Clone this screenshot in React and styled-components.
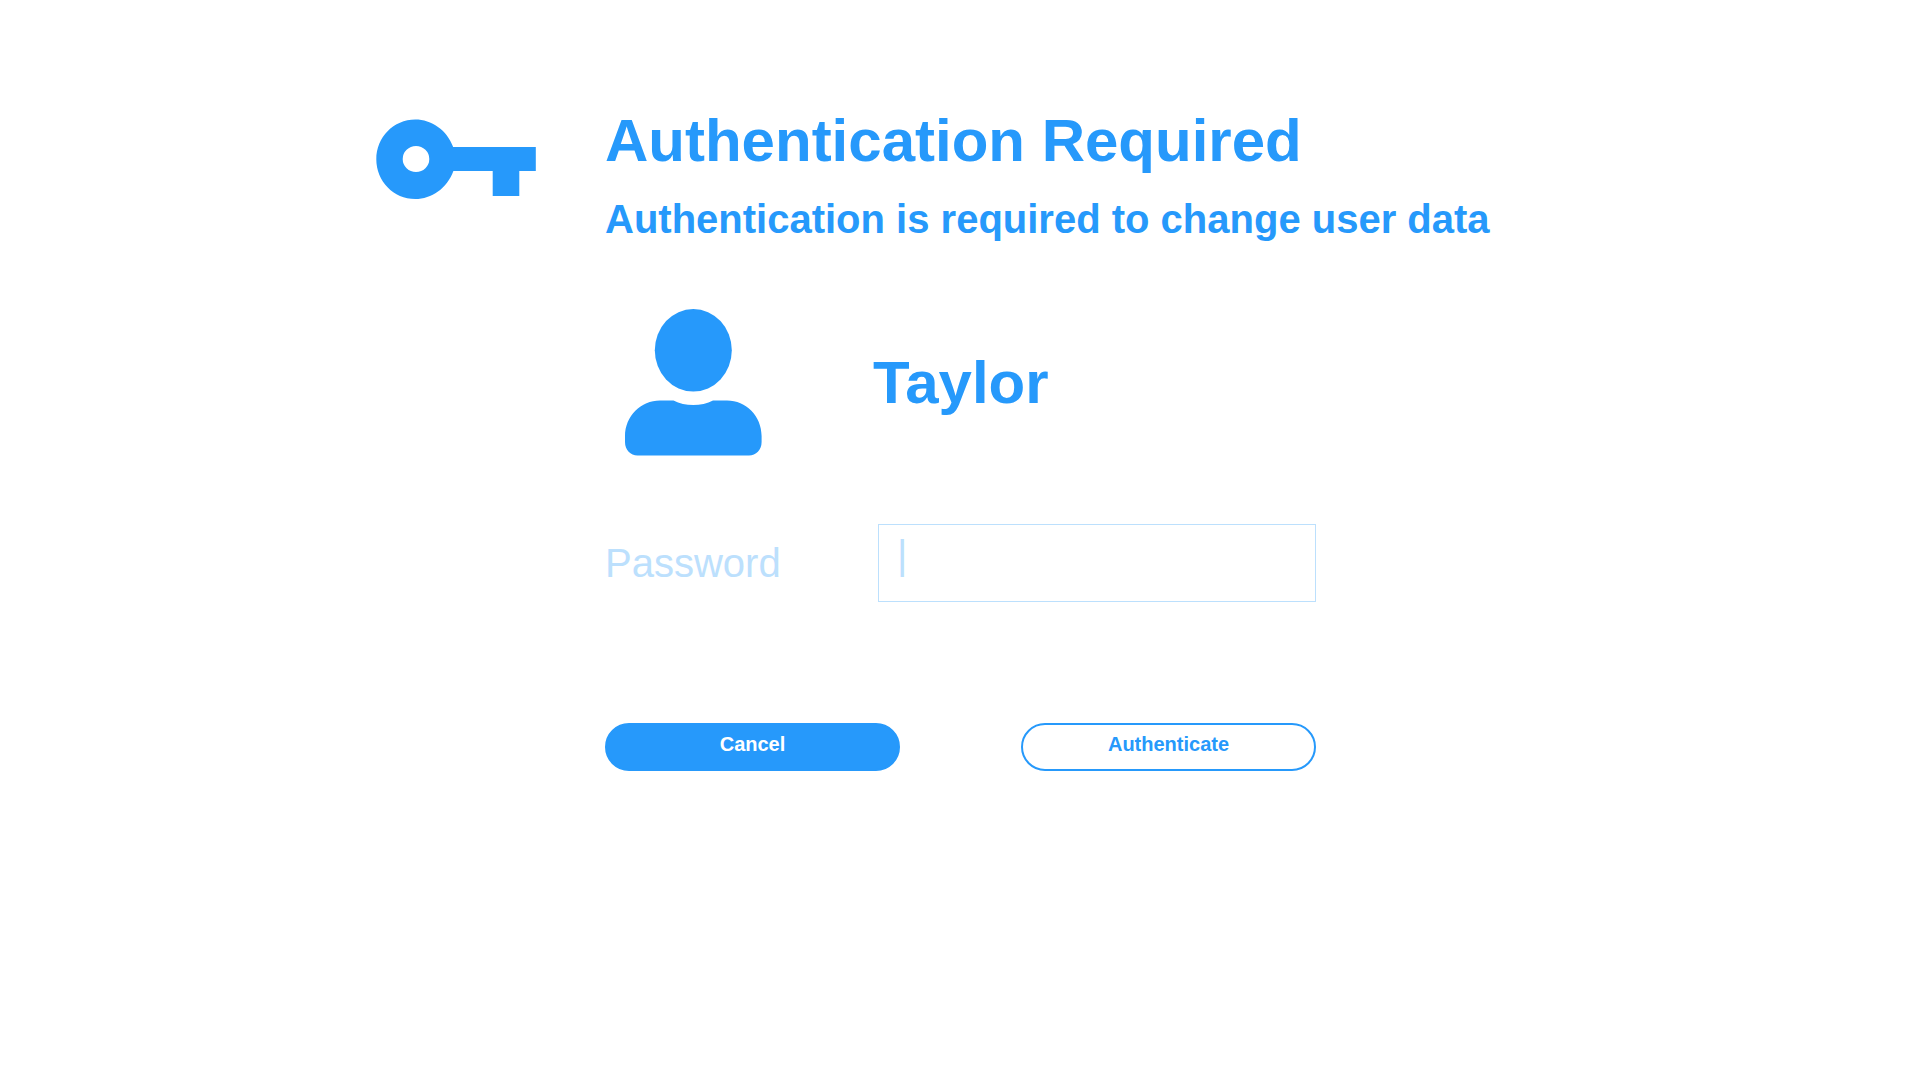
import React from "react";
import styled, { createGlobalStyle } from "styled-components";

const BLUE = "#2699fb";
const PALE = "#bce0fd";

const GlobalStyle = createGlobalStyle`
  *, *::before, *::after { box-sizing: border-box; }
  body {
    margin: 0;
    background: #ffffff;
    color: ${BLUE};
    font-family: Arial, "Liberation Sans", Helvetica, sans-serif;
  }
`;

const Page = styled.main`
  max-width: 1168px;
  margin: 0 auto;
  padding: 107px 0 64px;
  display: grid;
  grid-template-columns: 229px 1fr;
`;

const KeyColumn = styled.div`
  padding-top: 12px;
`;

const Icon = styled.svg`
  display: block;
  fill: ${BLUE};
`;

const Form = styled.form`
  display: flex;
  flex-direction: column;
  min-width: 0;
`;

const Header = styled.header`
  display: flex;
  flex-direction: column;
  gap: 21px;
`;

const Title = styled.h1`
  margin: 0;
  font-size: 60px;
  line-height: 68px;
`;

const Subtitle = styled.h2`
  margin: 0;
  font-size: 40px;
  line-height: 46px;
`;

const UserRow = styled.section`
  margin-top: 67px;
  padding-left: 20px;
  display: flex;
  align-items: center;
  gap: 111px;
`;

const UserName = styled.p`
  margin: 0;
  font-size: 60px;
  font-weight: bold;
  line-height: 68px;
`;

const Field = styled.div`
  margin-top: 68px;
  max-width: 711px;
  display: grid;
  grid-template-columns: 273px 1fr;
  align-items: center;
`;

const Label = styled.label`
  color: ${PALE};
  font-size: 40px;
  line-height: 46px;
`;

const Input = styled.input`
  width: 100%;
  height: 78px;
  padding: 0 18px 16px;
  border: 1px solid ${PALE};
  border-radius: 0;
  outline: none;
  background: transparent;
  color: ${PALE};
  font-family: inherit;
  font-size: 40px;
`;

const Actions = styled.div`
  margin-top: 121px;
  max-width: 711px;
  display: flex;
  justify-content: space-between;
`;

const Button = styled.button`
  width: 295px;
  height: 48px;
  padding: 0 0 6px;
  border: 2px solid ${BLUE};
  border-radius: 24px;
  background: ${(p) => (p.$filled ? BLUE : "transparent")};
  color: ${(p) => (p.$filled ? "#ffffff" : BLUE)};
  font-family: inherit;
  font-size: 20px;
  font-weight: bold;
  cursor: pointer;
`;

const KeyIcon = () => (
  <Icon width="160" height="81" viewBox="0 0 160 81" aria-hidden="true">
    <path
      fillRule="evenodd"
      d="M39.3 .5C55.5 .5 71 11 77.2 28H159.8V52H143.3V77H116.7V52H77.4C71 69.500 55.500 80 39.300 80C17.500 80 .3 62 .3 40.200S17.500 .5 39.300 .5ZM40 27A13.300 13 0 1 0 40 53A13.300 13 0 1 0 40 27Z"
    />
  </Icon>
);

const UserIcon = () => (
  <Icon width="137" height="147" viewBox="0 0 137 147" aria-hidden="true">
    <ellipse cx="68.3" cy="41.3" rx="38.5" ry="41.3" />
    <path d="M35 91.400H48.500C60 97.400 76.500 97.400 88 91.400H102C121 91.400 136.600 107 136.600 127V133C136.600 141 131 146.500 124 146.500H12.500C5.500 146.500 0 141 0 133V127C0 107 16 91.400 35 91.400Z" />
  </Icon>
);

export default function App() {
  return (
    <>
      <GlobalStyle />
      <Page>
        <KeyColumn>
          <KeyIcon />
        </KeyColumn>
        <Form onSubmit={(e) => e.preventDefault()}>
          <Header>
            <Title>Authentication Required</Title>
            <Subtitle>Authentication is required to change user data</Subtitle>
          </Header>
          <UserRow>
            <UserIcon />
            <UserName>Taylor</UserName>
          </UserRow>
          <Field>
            <Label htmlFor="password">Password</Label>
            <Input id="password" type="text" defaultValue="|" autoComplete="off" />
          </Field>
          <Actions>
            <Button type="button" $filled>Cancel</Button>
            <Button type="submit">Authenticate</Button>
          </Actions>
        </Form>
      </Page>
    </>
  );
}
